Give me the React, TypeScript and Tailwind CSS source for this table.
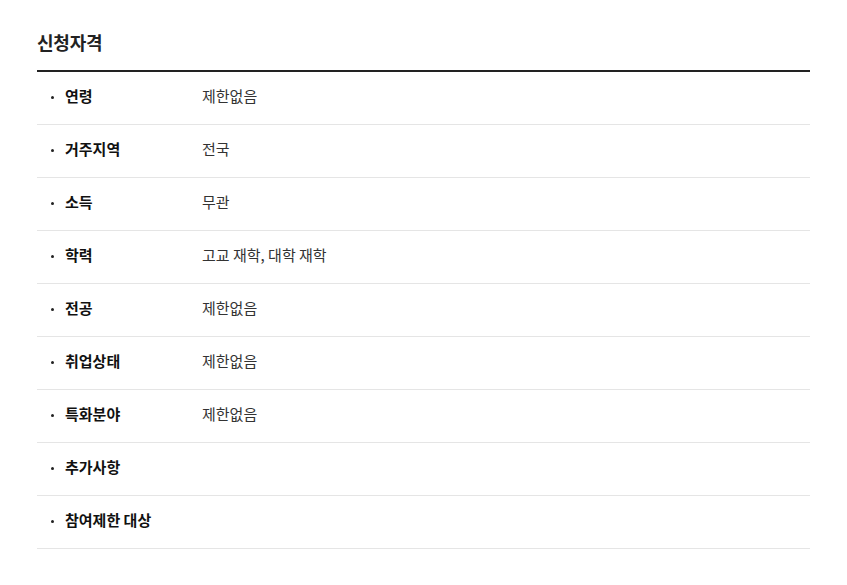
const rows: { label: string; value: string }[] = [
  { label: '연령', value: '제한없음' },
  { label: '거주지역', value: '전국' },
  { label: '소득', value: '무관' },
  { label: '학력', value: '고교 재학, 대학 재학' },
  { label: '전공', value: '제한없음' },
  { label: '취업상태', value: '제한없음' },
  { label: '특화분야', value: '제한없음' },
  { label: '추가사항', value: '' },
  { label: '참여제한 대상', value: '' },
];

export default function App() {
  return (
    <div
      className="min-h-[585px] bg-white px-[37px] pt-[29px] text-[#222]"
      style={{ fontFamily: '"Noto Sans CJK KR", "Noto Sans", sans-serif' }}
    >
      <h2 className="text-[18px] font-bold leading-[26px] tracking-[-0.2px] text-[#222]">신청자격</h2>

      <ul className="mt-[15px] border-t-2 border-[#222]">
        {rows.map((row) => (
          <li key={row.label} className="flex h-[53px] items-center border-b border-[#e5e5e5] pb-[3px] text-[15px]">
            <div className="flex w-[165px] shrink-0 items-center">
              <span className="ml-[14px] mr-[11px] mt-[2px] h-[3px] w-[3px] rounded-full bg-[#222]" />
              <span className="font-bold text-[#111]">{row.label}</span>
            </div>
            <span className="text-[#333]">{row.value}</span>
          </li>
        ))}
      </ul>
    </div>
  );
}
